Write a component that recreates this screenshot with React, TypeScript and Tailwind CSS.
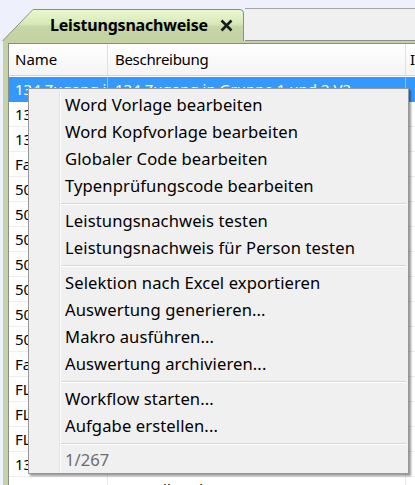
import React from "react";

const rows = [
  { name: "134 Zugang in Gruppe", desc: "134 Zugang in Gruppe 1 und 2 V2", selected: true },
  { name: "131 Abgang", desc: "131 Abgang aus Gruppe" },
  { name: "132 Wechsel", desc: "132 Wechsel der Gruppe" },
  { name: "Fahrzeugkontrolle", desc: "Fahrzeugkontrolle jährlich" },
  { name: "501 Schulung", desc: "501 Schulung Grundkurs" },
  { name: "502 Schulung", desc: "502 Schulung Aufbaukurs" },
  { name: "503 Schulung", desc: "503 Schulung Praxis" },
  { name: "504 Schulung", desc: "504 Schulung Theorie" },
  { name: "505 Schulung", desc: "505 Schulung Prüfung" },
  { name: "506 Schulung", desc: "506 Schulung Wiederholung" },
  { name: "507 Schulung", desc: "507 Schulung Abschluss" },
  { name: "Fahrerlaubnis", desc: "Fahrerlaubnis Klasse B" },
  { name: "FL Gabelstapler", desc: "FL Gabelstapler Einweisung" },
  { name: "FL Hubwagen", desc: "FL Hubwagen Einweisung" },
  { name: "FL Kran", desc: "FL Kran Einweisung" },
  { name: "133 Übertritt", desc: "133 Übertritt Gruppe" },
  { name: "", desc: "Kontrolle Fahrzeuge" },
];

const groups = [
  ["Word Vorlage bearbeiten", "Word Kopfvorlage bearbeiten", "Globaler Code bearbeiten", "Typenprüfungscode bearbeiten"],
  ["Leistungsnachweis testen", "Leistungsnachweis für Person testen"],
  ["Selektion nach Excel exportieren", "Auswertung generieren...", "Makro ausführen...", "Auswertung archivieren..."],
  ["Workflow starten...", "Aufgabe erstellen..."],
];

export default function App() {
  return (
    <div className="relative w-[415px] h-[485px] overflow-hidden bg-[#eef0fb] flex flex-col font-['Noto_Sans',sans-serif] text-black">
      {/* Tab strip */}
      <div className="h-[8px] shrink-0" />
      <div className="flex h-[33px] shrink-0">
        <div className="relative w-[245px] h-full pl-[3px]">
          <svg className="absolute left-[2px] top-0" width="243" height="33" viewBox="0 0 243 33">
            <defs>
              <linearGradient id="tabg" x1="0" y1="0" x2="0" y2="1">
                <stop offset="0" stopColor="#eafad0" />
                <stop offset="0.45" stopColor="#d8e8b8" />
                <stop offset="0.55" stopColor="#c6d6a6" />
                <stop offset="1" stopColor="#c2d2a2" />
              </linearGradient>
            </defs>
            <path d="M0.5 33 L31 1.5 L238 1.5 Q241.5 1.5 241.5 5 L241.5 33 Z" fill="url(#tabg)" />
            <path d="M0.5 33 L31 1.5 L238 1.5 Q241.5 1.5 241.5 5 L241.5 33" fill="none" stroke="#8c8c8c" strokeWidth="1" />
          </svg>
          <div className="relative flex items-center h-full pl-[47px] gap-[14px]">
            <span className="font-bold text-[16px] tracking-[-0.2px]">Leistungsnachweise</span>
            <svg width="13" height="13" viewBox="0 0 13 13" className="mt-[2px] -ml-[2px]">
              <path d="M1.5 1.5 L11.5 11.5 M11.5 1.5 L1.5 11.5" stroke="#1a1a1a" strokeWidth="2.6" />
            </svg>
          </div>
        </div>
        <div className="flex-1 bg-[#f0f0f0] border-t border-[#a6a6a6] border-b border-b-[#8c8c8c]" />
      </div>

      {/* Frame */}
      <div className="flex-1 flex flex-col bg-[#c4d3a4] border-l-[3px] border-l-[#eef0fb] pl-[5px] pt-[2px] min-h-0">
        <div className="flex-1 flex flex-col bg-white border-l border-t border-[#8a8a8a] min-h-0 overflow-hidden text-[15px]">
          {/* Header */}
          <div className="grid grid-cols-[99px_298px_1fr] h-[32px] shrink-0 bg-gradient-to-b from-white to-[#f4f4f4] border-b border-[#d5d5d5]">
            <div className="flex items-center pl-[6px] border-r border-[#e2e2e2]">Name</div>
            <div className="flex items-center pl-[7px] border-r border-[#e2e2e2] tracking-[-0.3px]">Beschreibung</div>
            <div className="flex items-center pl-[4px] overflow-hidden">ID</div>
          </div>
          {/* Rows */}
          {rows.map((r, i) => (
            <div
              key={i}
              className={`grid grid-cols-[99px_298px_1fr] h-[25px] shrink-0 border-b ${
                r.selected ? "bg-[#3399ff] text-white border-[#3399ff] mt-[1px]" : "border-[#eeeeee]"
              }`}
            >
              <div className={`flex items-center pl-[6px] whitespace-nowrap overflow-hidden border-r ${r.selected ? "border-[#8fc3fb]" : "border-[#e6e6e6]"}`}>
                {r.name}
              </div>
              <div className={`flex items-center pl-[7px] whitespace-nowrap overflow-hidden border-r ${r.selected ? "border-[#8fc3fb]" : "border-[#e6e6e6]"}`}>
                {r.desc}
              </div>
              <div />
            </div>
          ))}
        </div>
      </div>

      {/* Context menu */}
      <div className="absolute left-[28px] top-[88px] w-[381px] h-[386px] bg-[#f0f0f0] border border-[#979797] shadow-[2px_2px_2px_rgba(0,0,0,0.4)] pt-[3px] flex">
        <div className="w-[31px] shrink-0 border-r border-[#e2e2e2]" />
        <div className="flex-1 flex flex-col border-l border-white text-[16.6px]">
          {groups.map((g, gi) => (
            <React.Fragment key={gi}>
              {g.map((item) => (
                <div key={item} className="h-[27px] flex items-center pl-[4px] whitespace-nowrap tracking-[0.1px]">
                  {item}
                </div>
              ))}
              <div className="h-[8px] flex flex-col justify-center pr-[2px]">
                <div className="h-px bg-[#d7d7d7]" />
                <div className="h-px bg-white" />
              </div>
            </React.Fragment>
          ))}
          <div className="h-[25px] flex items-center pl-[4px] text-[#6d6d6d]">1/267</div>
        </div>
      </div>
    </div>
  );
}
